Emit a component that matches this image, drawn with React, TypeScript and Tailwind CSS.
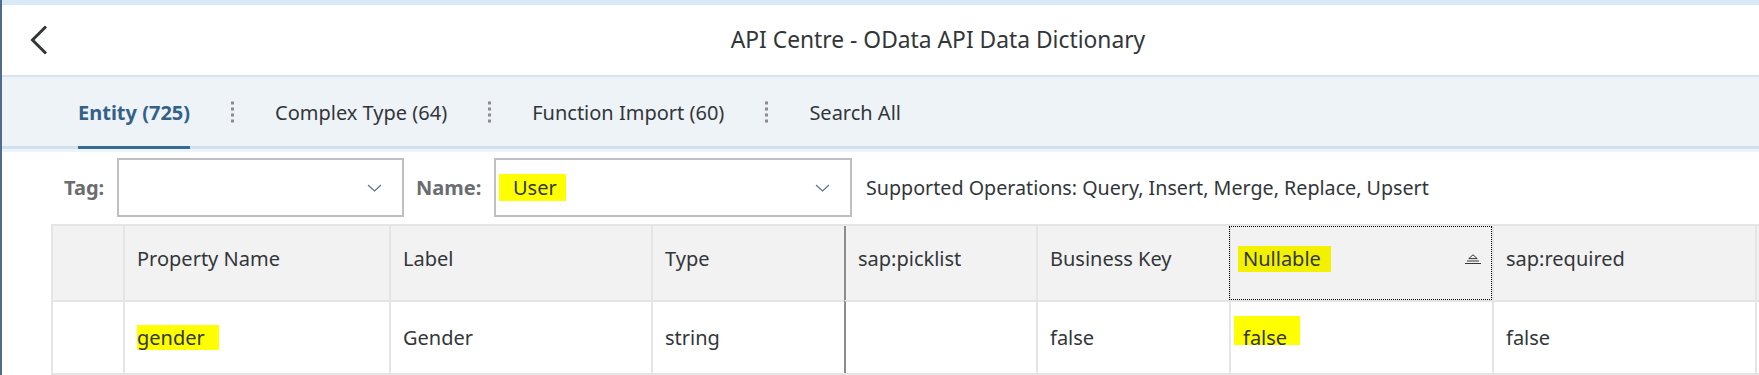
import React from "react";

const tabs = [
  { label: "Entity (725)", active: true },
  { label: "Complex Type (64)" },
  { label: "Function Import (60)" },
  { label: "Search All" },
];

function TabDots() {
  return (
    <svg width="3" height="22" viewBox="0 0 3 22" className="shrink-0">
      {[2, 8, 14, 20].map((y) => (
        <rect key={y} x="0" y={y - 1.5} width="3" height="3" fill="#8c8c8c" />
      ))}
    </svg>
  );
}

function SelectChevron() {
  return (
    <svg width="15" height="8" viewBox="0 0 15 8">
      <polyline points="1,1 7.5,7 14,1" fill="none" stroke="#5d7287" strokeWidth="1.2" />
    </svg>
  );
}

function SortIcon() {
  return (
    <svg width="16" height="10" viewBox="0 0 16 10">
      <path d="M8 0.8 L12.2 4.6 H3.8 Z" fill="none" stroke="#32363a" strokeWidth="1" />
      <line x1="2" y1="7" x2="14" y2="7" stroke="#32363a" strokeWidth="1" />
      <line x1="0" y1="9.5" x2="16" y2="9.5" stroke="#32363a" strokeWidth="1" />
    </svg>
  );
}

export default function App() {
  const cellBorder = "border-l-2 border-[#e5e5e5]";
  const dark = "border-l-2 border-[#8c8c8c]";

  return (
    <div className="w-[1759px] h-[375px] overflow-hidden bg-white border-l-2 border-[#4f6d8a] font-['Noto_Sans',sans-serif] text-[#32363a]">
      <div className="h-[5px] bg-[#d9e9f5]" />

      {/* header */}
      <div className="h-[72px] flex items-center border-b-2 border-[#d6e4f2]">
        <div className="w-[115px] pl-[28px] flex items-center">
          <svg width="18" height="30" viewBox="0 0 18 30">
            <polyline points="16,1.5 2.5,15 16,28.5" fill="none" stroke="#32363a" strokeWidth="3" />
          </svg>
        </div>
        <div className="flex-1 text-center text-[22.8px]">API Centre - OData API Data Dictionary</div>
      </div>

      {/* tabs */}
      <div className="h-[72px] bg-[#eef3f8] border-b-[3px] border-[#d1e0ef] flex items-stretch pl-[76px] gap-[41px] text-[20px]">
        {tabs.map((t, i) => (
          <React.Fragment key={t.label}>
            {i > 0 && (
              <div className="flex items-center">
                <TabDots />
              </div>
            )}
            <div
              className={
                t.active
                  ? "flex items-center pt-[2px] -mb-[3px] border-b-[3px] border-[#366a97] font-bold text-[#346187]"
                  : "flex items-center pt-[2px]"
              }
            >
              {t.label}
            </div>
          </React.Fragment>
        ))}
      </div>
      <div className="h-[3px] bg-[#eef3f8]" />

      {/* filters */}
      <div className="mt-[6px] h-[59px] flex items-center pl-[62px] text-[20px]">
        <div className="w-[53px] font-bold text-[#6a6d70]">Tag:</div>
        <div className="w-[287px] h-[59px] border-2 border-[#bfbfbf] flex items-center justify-end pr-[20px]">
          <SelectChevron />
        </div>
        <div className="w-[78px] ml-[12px] font-bold text-[#6a6d70]">Name:</div>
        <div className="w-[358px] h-[59px] border-2 border-[#bfbfbf] flex items-center justify-between pl-[3px] pr-[20px]">
          <span className="inline-block bg-[#ffff00] pl-[14px] pr-[9px] leading-[27px]">User</span>
          <SelectChevron />
        </div>
        <div className="ml-[14px] text-[19.7px]">Supported Operations: Query, Insert, Merge, Replace, Upsert</div>
      </div>

      {/* table */}
      <div className="mt-[7px] pl-[49px]">
        <div className="w-max border-t-2 border-b-2 border-[#e5e5e5] text-[20px] grid grid-cols-[72px_266px_262px_193px_192px_193px_263px_263px_200px]">
          <div className={`h-[74px] bg-[#f2f2f2] ${cellBorder}`} />
          <div className={`h-[74px] bg-[#f2f2f2] flex items-center pl-[12px] pb-[8px] ${cellBorder}`}>Property Name</div>
          <div className={`h-[74px] bg-[#f2f2f2] flex items-center pl-[12px] pb-[8px] ${cellBorder}`}>Label</div>
          <div className={`h-[74px] bg-[#f2f2f2] flex items-center pl-[12px] pb-[8px] ${cellBorder}`}>Type</div>
          <div className={`h-[74px] bg-[#f2f2f2] flex items-center pl-[12px] pb-[8px] ${dark}`}>sap:picklist</div>
          <div className={`h-[74px] bg-[#f2f2f2] flex items-center pl-[12px] pb-[8px] ${cellBorder}`}>Business Key</div>
          <div className={`h-[74px] bg-[#f2f2f2] flex items-center justify-between pl-[7px] pr-[11px] pb-[8px] outline-1 outline-dotted outline-black -outline-offset-1 ${cellBorder}`}>
            <span className="inline-block bg-[#f2f200] pl-[5px] pr-[10px] leading-[26px]">Nullable</span>
            <SortIcon />
          </div>
          <div className={`h-[74px] bg-[#f2f2f2] flex items-center pl-[12px] pb-[8px] ${cellBorder}`}>sap:required</div>
          <div className={`h-[74px] bg-[#f2f2f2] ${cellBorder}`} />

          <div className={`h-[73px] border-t-2 border-t-[#e5e5e5] ${cellBorder}`} />
          <div className={`h-[73px] border-t-2 border-t-[#e5e5e5] flex items-center pl-[12px] ${cellBorder}`}>
            <span className="inline-block bg-[#ffff00] pr-[14px] leading-[25px]">gender</span>
          </div>
          <div className={`h-[73px] border-t-2 border-t-[#e5e5e5] flex items-center pl-[12px] ${cellBorder}`}>Gender</div>
          <div className={`h-[73px] border-t-2 border-t-[#e5e5e5] flex items-center pl-[12px] ${cellBorder}`}>string</div>
          <div className={`h-[73px] border-t-2 border-t-[#e5e5e5] ${dark}`} />
          <div className={`h-[73px] border-t-2 border-t-[#e5e5e5] flex items-center pl-[12px] ${cellBorder}`}>false</div>
          <div className={`h-[73px] border-t-2 border-t-[#e5e5e5] flex items-center pl-[3px] ${cellBorder}`}>
            <span className="block bg-[#ffff00] pl-[9px] pr-[13px] pt-[8px] h-[29px] -mt-[8px] mb-[6px] leading-[27px]">false</span>
          </div>
          <div className={`h-[73px] border-t-2 border-t-[#e5e5e5] flex items-center pl-[12px] ${cellBorder}`}>false</div>
          <div className={`h-[73px] border-t-2 border-t-[#e5e5e5] ${cellBorder}`} />
        </div>
      </div>
    </div>
  );
}
